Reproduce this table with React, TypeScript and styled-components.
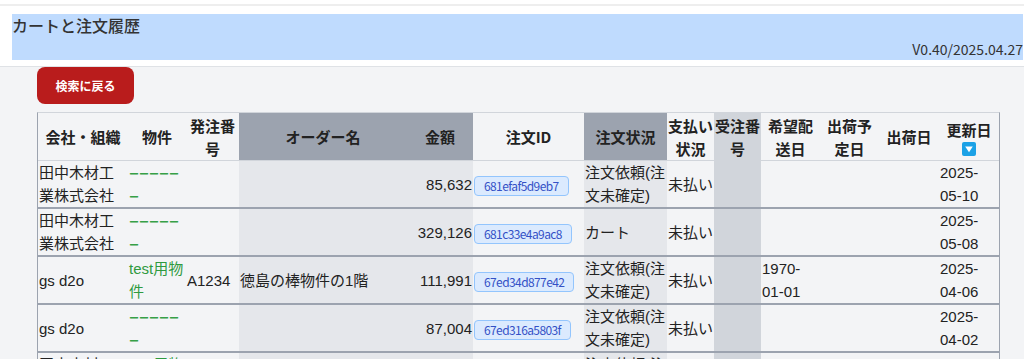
import React from "react";
import styled, { createGlobalStyle } from "styled-components";

const GlobalStyle = createGlobalStyle`
  html, body {
    margin: 0;
    padding: 0;
    overflow: hidden;
    background: #ffffff;
  }
  body {
    font-family: "Noto Sans CJK JP", "Noto Sans", sans-serif;
    color: #222222;
  }
`;

type Tone = "plain" | "light" | "mid" | "dark";

const toneColor: Record<Tone, string> = {
  plain: "transparent",
  light: "#e5e7eb",
  mid: "#d1d5db",
  dark: "#9ca3af",
};

const TopStrip = styled.div`
  height: 4px;
  border-bottom: 2px solid #eeeeee;
`;

const HeaderArea = styled.header`
  padding: 8px 1px 6px 12px;
  border-bottom: 1px solid #dfe2e6;
`;

const TitleBox = styled.div`
  height: 46px;
  background: #bfdbfe;
  display: flex;
  flex-direction: column;
  justify-content: space-between;
`;

const Title = styled.h1`
  margin: 0;
  font-size: 16px;
  line-height: 22px;
  font-weight: 500;
  color: #333333;
`;

const Version = styled.div`
  align-self: flex-end;
  font-size: 14px;
  line-height: 18px;
  margin-bottom: 2px;
  color: #333333;
`;

const Main = styled.main`
  background: #f3f4f6;
  min-height: 100vh;
  padding-left: 37px;
`;

const BackButton = styled.button`
  display: block;
  width: 97px;
  height: 37px;
  margin: 0 0 8px;
  border: none;
  border-radius: 8px;
  background: #b91c1c;
  color: #ffffff;
  font-family: inherit;
  font-size: 12px;
  font-weight: 700;
  cursor: pointer;
`;

const Table = styled.table`
  width: 963px;
  table-layout: fixed;
  border-collapse: separate;
  border-spacing: 0;
  border-top: 1px solid #d1d5db;
  border-left: 1px solid #9ca3af;
  border-right: 1px solid #9ca3af;
`;

const Col = styled.col<{ $w: number }>`
  width: ${(p) => p.$w}px;
`;

const Th = styled.th<{ $tone: Tone }>`
  height: 47px;
  padding: 0;
  font-size: 15px;
  line-height: 23px;
  font-weight: 700;
  text-align: center;
  vertical-align: middle;
  background: ${(p) => toneColor[p.$tone]};
  border-bottom: 1px solid #d1d5db;
`;

const Td = styled.td<{ $tone: Tone; $align?: "left" | "right" }>`
  height: 46px;
  padding: ${(p) => (p.$align === "right" ? "0 1px 0 0" : "0 0 0 1px")};
  font-family: "Liberation Sans", "Noto Sans CJK JP", sans-serif;
  font-size: 15px;
  line-height: 23px;
  text-align: ${(p) => p.$align ?? "left"};
  vertical-align: middle;
  background: ${(p) => toneColor[p.$tone]};
  border-bottom: 2px solid #9ca3af;
  overflow: hidden;
`;

const Property = styled.span`
  color: #2f9a3f;
`;

/* 物件未設定のプレースホルダー */
const Dashes = styled.span`
  color: #36a046;
  font-family: "Noto Sans CJK JP", sans-serif;
  font-size: 10px;
  font-weight: 700;
  line-height: 0;
  line-break: loose;
`;

const IdBadge = styled.span`
  display: inline-block;
  height: 18px;
  padding: 0 9px;
  border: 1px solid #93c5fd;
  border-radius: 4px;
  background: #dbeafe;
  color: #3451c6;
  font-family: "Noto Sans CJK JP", sans-serif;
  font-size: 12px;
  letter-spacing: -0.6px;
  line-height: 18px;
  vertical-align: middle;
`;

const SortIcon = styled.svg`
  display: block;
  margin: 1px auto 0;
`;

type Column = { label: string; width: number; head: Tone; body: Tone };

const columns: Column[] = [
  { label: "会社・組織", width: 90, head: "plain", body: "plain" },
  { label: "物件", width: 58, head: "plain", body: "plain" },
  { label: "発注番号", width: 53, head: "plain", body: "plain" },
  { label: "オーダー名", width: 168, head: "dark", body: "light" },
  { label: "金額", width: 66, head: "dark", body: "light" },
  { label: "注文ID", width: 111, head: "plain", body: "plain" },
  { label: "注文状況", width: 83, head: "dark", body: "light" },
  { label: "支払い状況", width: 47, head: "plain", body: "plain" },
  { label: "受注番号", width: 47, head: "mid", body: "mid" },
  { label: "希望配送日", width: 59, head: "plain", body: "plain" },
  { label: "出荷予定日", width: 59, head: "plain", body: "plain" },
  { label: "出荷日", width: 60, head: "plain", body: "plain" },
  { label: "更新日", width: 60, head: "plain", body: "plain" },
];

type Order = {
  company: string;
  property: string | null;
  orderNo: string;
  name: string;
  amount: string;
  id: string;
  status: string;
  payment: string;
  desired: string;
  updated: string;
};

const orders: Order[] = [
  {
    company: "田中木材工業株式会社",
    property: null,
    orderNo: "",
    name: "",
    amount: "85,632",
    id: "681efaf5d9eb7",
    status: "注文依頼(注文未確定)",
    payment: "未払い",
    desired: "",
    updated: "2025-05-10",
  },
  {
    company: "田中木材工業株式会社",
    property: null,
    orderNo: "",
    name: "",
    amount: "329,126",
    id: "681c33e4a9ac8",
    status: "カート",
    payment: "未払い",
    desired: "",
    updated: "2025-05-08",
  },
  {
    company: "gs d2o",
    property: "test用物件",
    orderNo: "A1234",
    name: "徳島の棒物件の1階",
    amount: "111,991",
    id: "67ed34d877e42",
    status: "注文依頼(注文未確定)",
    payment: "未払い",
    desired: "1970-01-01",
    updated: "2025-04-06",
  },
  {
    company: "gs d2o",
    property: null,
    orderNo: "",
    name: "",
    amount: "87,004",
    id: "67ed316a5803f",
    status: "注文依頼(注文未確定)",
    payment: "未払い",
    desired: "",
    updated: "2025-04-02",
  },
  {
    company: "田中木材工業株式会社",
    property: "test用物件",
    orderNo: "",
    name: "",
    amount: "76,120",
    id: "67e8b21c4d0a9",
    status: "注文依頼(注文未確定)",
    payment: "未払い",
    desired: "",
    updated: "2025-03-30",
  },
];

function SortDown() {
  return (
    <SortIcon width="14" height="14" viewBox="0 0 14 14">
      <rect width="14" height="14" rx="2" fill="#1ba1e6" />
      <polygon points="3.2,4.5 10.8,4.5 7,10.2" fill="#ffffff" />
    </SortIcon>
  );
}

export default function App() {
  const t = (i: number) => columns[i].body;
  return (
    <>
      <GlobalStyle />
      <TopStrip />
      <HeaderArea>
        <TitleBox>
          <Title>カートと注文履歴</Title>
          <Version>V0.40/2025.04.27</Version>
        </TitleBox>
      </HeaderArea>
      <Main>
        <BackButton>検索に戻る</BackButton>
        <Table>
          <colgroup>
            {columns.map((c) => (
              <Col key={c.label} $w={c.width} />
            ))}
          </colgroup>
          <thead>
            <tr>
              {columns.map((c) => (
                <Th key={c.label} $tone={c.head}>
                  {c.label}
                  {c.label === "更新日" && <SortDown />}
                </Th>
              ))}
            </tr>
          </thead>
          <tbody>
            {orders.map((o) => (
              <tr key={o.id}>
                <Td $tone={t(0)}>{o.company}</Td>
                <Td $tone={t(1)}>
                  {o.property ? (
                    <Property>{o.property}</Property>
                  ) : (
                    <Dashes>ーーーーーー</Dashes>
                  )}
                </Td>
                <Td $tone={t(2)}>{o.orderNo}</Td>
                <Td $tone={t(3)}>{o.name}</Td>
                <Td $tone={t(4)} $align="right">
                  {o.amount}
                </Td>
                <Td $tone={t(5)}>
                  <IdBadge>{o.id}</IdBadge>
                </Td>
                <Td $tone={t(6)}>{o.status}</Td>
                <Td $tone={t(7)}>{o.payment}</Td>
                <Td $tone={t(8)} />
                <Td $tone={t(9)}>{o.desired}</Td>
                <Td $tone={t(10)} />
                <Td $tone={t(11)} />
                <Td $tone={t(12)}>{o.updated}</Td>
              </tr>
            ))}
          </tbody>
        </Table>
      </Main>
    </>
  );
}
